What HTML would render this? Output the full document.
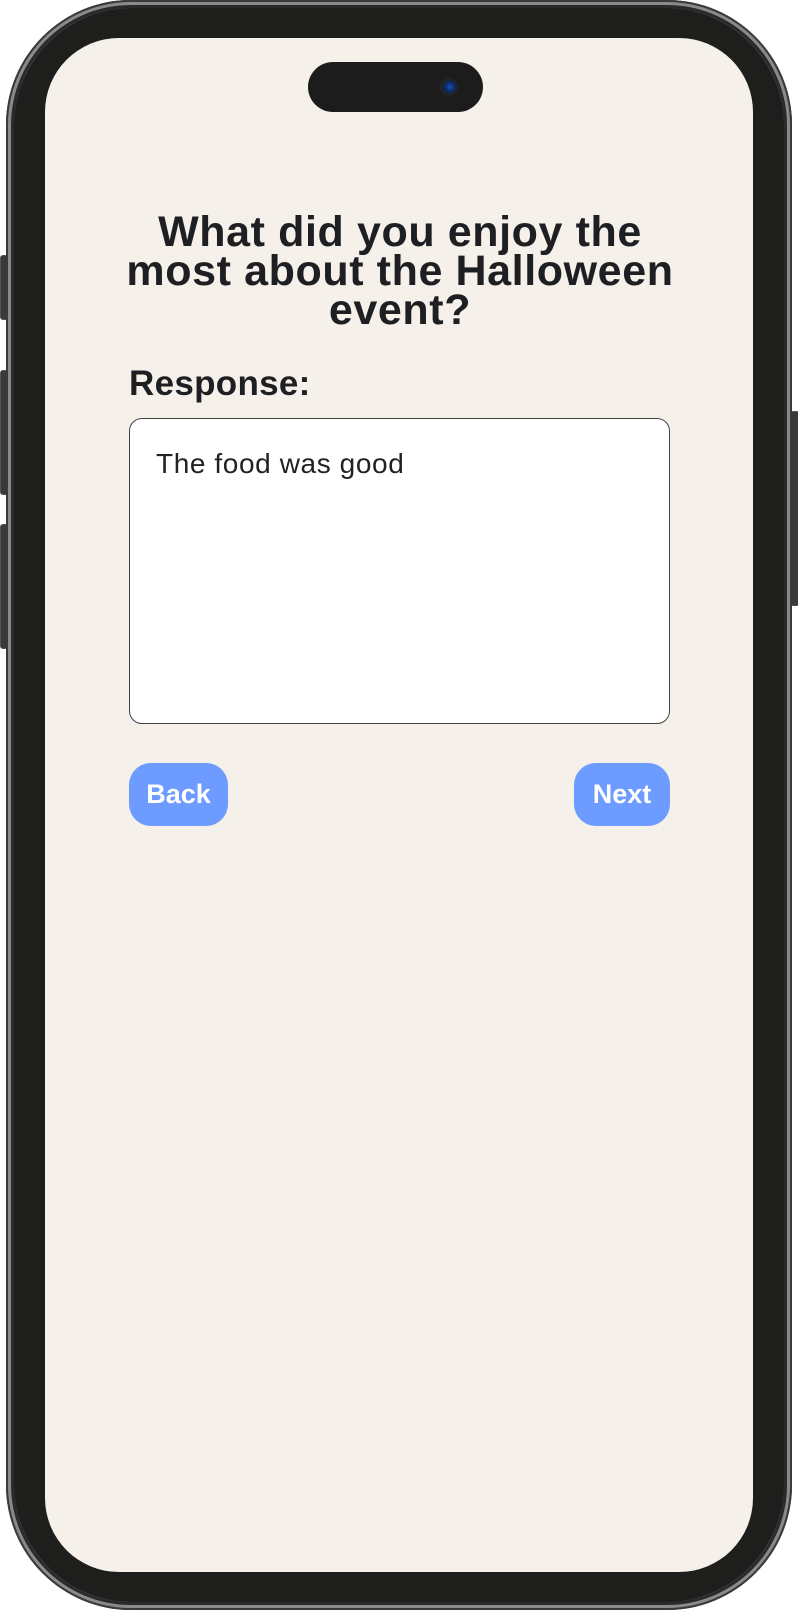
<!DOCTYPE html>
<html><head><style>
html,body{margin:0;padding:0;width:798px;height:1610px;background:#fff;overflow:hidden;font-family:"Liberation Sans",sans-serif}
.abs{position:absolute}
.frame{left:6px;top:0;width:786px;height:1610px;border-radius:125px;background:#555;box-shadow:inset 0 0 0 2px #3a3a3a,inset 0 0 0 5px #8a8a8a,inset 0 0 0 8px #2a2a2a}
.bezel{left:14px;top:8px;width:770px;height:1594px;border-radius:118px;background:#1e1e1c}
.screen{left:45px;top:38px;width:708px;height:1534px;border-radius:74px;background:#f5f1ea}
.notch{left:308px;top:62px;width:175px;height:50px;border-radius:25px;background:#1c1c1c}
.cam{left:440px;top:78px;width:18px;height:18px;border-radius:50%;background:radial-gradient(circle at 55% 50%,#1a4fb0 0,#0b2a66 35%,#222 60%,#333 100%)}
.btn{background:#3a3a3a;border:1px solid #555}
h1{position:absolute;left:50px;width:700px;top:213px;margin:0;text-align:center;font-size:43px;letter-spacing:0.6px;line-height:39px;font-weight:bold;color:#1d1f22;white-space:nowrap}
.lab{left:129px;top:364px;font-size:35px;letter-spacing:0.3px;font-weight:bold;color:#1d1f22}
.box{left:129px;top:418px;width:539px;height:304px;border:1.5px solid #444;border-radius:13px;background:#fff}
.txt{left:156px;top:448px;font-size:28px;letter-spacing:0.6px;color:#222}
.b{top:763px;height:63px;border-radius:22px;background:#6d9bff;color:#fff;font-size:27px;font-weight:bold;text-align:center;line-height:63px}
</style></head><body>
<div class="abs btn" style="left:0;top:255px;width:8px;height:63px;border-radius:3px"></div>
<div class="abs btn" style="left:0;top:370px;width:8px;height:123px;border-radius:3px"></div>
<div class="abs btn" style="left:0;top:524px;width:8px;height:123px;border-radius:3px"></div>
<div class="abs btn" style="left:790px;top:411px;width:8px;height:193px;border-radius:3px"></div>
<div class="abs frame"></div>
<div class="abs bezel"></div>
<div class="abs screen"></div>
<div class="abs notch"></div>
<div class="abs cam"></div>
<h1>What did you enjoy the<br>most about the Halloween<br>event?</h1>
<div class="abs lab">Response:</div>
<div class="abs box"></div>
<div class="abs txt">The food was good</div>
<div class="abs b" style="left:129px;width:99px">Back</div>
<div class="abs b" style="left:574px;width:96px">Next</div>
</body></html>
